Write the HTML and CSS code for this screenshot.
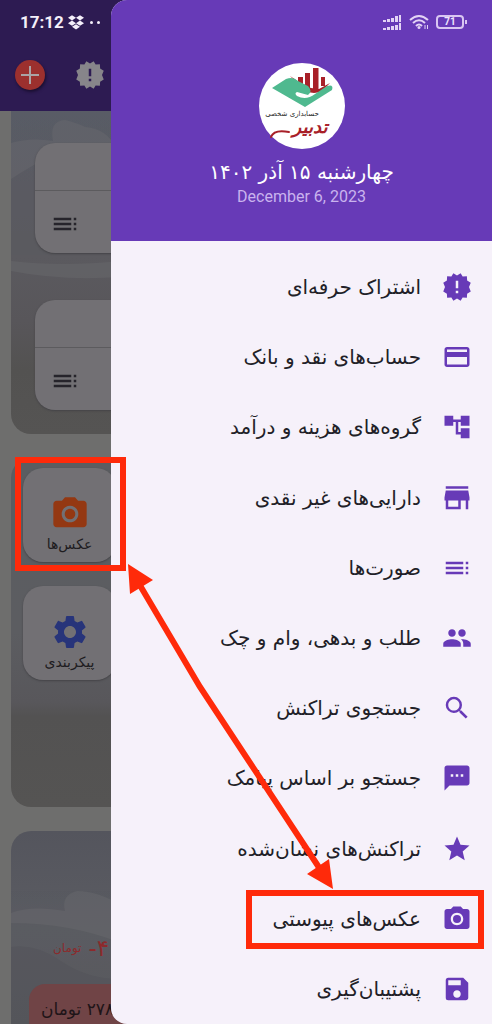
FILE: index.html
```html
<!DOCTYPE html>
<html lang="fa">
<head>
<meta charset="utf-8">
<meta name="viewport" content="width=device-width, initial-scale=1">
<title>تدبیر</title>
<link rel="stylesheet" href="styles.css">
</head>
<body>
<svg class="defs" aria-hidden="true">
  <symbol id="i-badge" viewBox="0 0 24 24"><path fill-rule="evenodd" d="M12 2.800 14.900 1l1.600 2.600 3.400-.2.2 3.300L23 8.500 21.600 12 23 15.500l-2.900 1.800-.2 3.300-3.400-.2-1.600 2.600L12 21.200 9.100 23l-1.600-2.600-3.400.2-.2-3.300L1 15.500 2.400 12 1 8.500l2.900-1.800.2-3.300 3.400.2L9.100 1zM11 7v6h2V7zm0 8v2h2v-2z"/></symbol>
  <symbol id="i-card" viewBox="0 0 24 24"><path d="M20 4H4c-1.110 0-1.990.89-1.990 2L2 18c0 1.110.89 2 2 2h16c1.110 0 2-.89 2-2V6c0-1.110-.89-2-2-2zm0 14H4v-6h16v6zm0-10H4V6h16v2z"/></symbol>
  <symbol id="i-tree" viewBox="0 0 24 24"><path d="M22 11V3h-7v3H9V3H2v8h7V8h2v10h4v3h7v-8h-7v3h-2V8h2v3z"/></symbol>
  <symbol id="i-shop" viewBox="0 0 24 24"><path fill-rule="evenodd" d="M3 2.500h18v2H3zM3 6h18l1 5.500V14h-1v7h-2v-7h-4v7H3v-7H2v-2.500zM5 14v5h8v-5z"/></symbol>
  <symbol id="i-toc" viewBox="0 0 24 24"><path d="M3 9h14V7H3v2zm0 4h14v-2H3v2zm0 4h14v-2H3v2zm16 0h2v-2h-2v2zm0-10v2h2V7h-2zm0 6h2v-2h-2v2z"/></symbol>
  <symbol id="i-people" viewBox="0 0 24 24"><path d="M16 11c1.660 0 2.990-1.340 2.990-3S17.660 5 16 5s-3 1.340-3 3 1.340 3 3 3zm-8 0c1.660 0 2.990-1.340 2.990-3S9.660 5 8 5 5 6.340 5 8s1.340 3 3 3zm0 2c-2.330 0-7 1.170-7 3.500V19h14v-2.500c0-2.330-4.670-3.500-7-3.500zm8 0c-.29 0-.62.02-.97.05 1.160.84 1.970 1.970 1.970 3.450V19h6v-2.500c0-2.330-4.670-3.500-7-3.500z"/></symbol>
  <symbol id="i-search" viewBox="0 0 24 24"><path d="M15.500 14h-.79l-.28-.27A6.471 6.471 0 0 0 16 9.500 6.500 6.500 0 1 0 9.500 16c1.610 0 3.090-.59 4.230-1.570l.27.28v.79l5 4.990L20.490 19l-4.990-5zm-6 0C7.010 14 5 11.990 5 9.500S7.010 5 9.500 5 14 7.010 14 9.500 11.990 14 9.500 14z"/></symbol>
  <symbol id="i-sms" viewBox="0 0 24 24"><path d="M20 2H4c-1.100 0-1.990.9-1.990 2L2 22l4-4h14c1.100 0 2-.9 2-2V4c0-1.100-.9-2-2-2zM9 11H7V9h2v2zm4 0h-2V9h2v2zm4 0h-2V9h2v2z"/></symbol>
  <symbol id="i-star" viewBox="0 0 24 24"><path d="M12 17.270L18.180 21l-1.640-7.030L22 9.240l-7.190-.61L12 2 9.190 8.630 2 9.240l5.460 4.730L5.820 21z"/></symbol>
  <symbol id="i-camera" viewBox="0 0 24 24"><circle cx="12" cy="12" r="3.200"/><path d="M9 2L7.170 4H4c-1.100 0-2 .9-2 2v12c0 1.100.9 2 2 2h16c1.100 0 2-.9 2-2V6c0-1.100-.9-2-2-2h-3.170L15 2H9zm3 15c-2.760 0-5-2.240-5-5s2.240-5 5-5 5 2.240 5 5-2.240 5-5 5z"/></symbol>
  <symbol id="i-save" viewBox="0 0 24 24"><path d="M17 3H5a2 2 0 0 0-2 2v14a2 2 0 0 0 2 2h14c1.100 0 2-.9 2-2V7l-4-4zm-5 16c-1.660 0-3-1.340-3-3s1.340-3 3-3 3 1.340 3 3-1.340 3-3 3zm3-10H5V5h10v4z"/></symbol>
  <symbol id="i-gear" viewBox="0 0 24 24"><path d="M19.140 12.940c.04-.3.060-.61.060-.94 0-.32-.02-.64-.07-.94l2.030-1.580a.49.49 0 0 0 .12-.61l-1.920-3.320a.488.488 0 0 0-.59-.22l-2.390.96c-.5-.38-1.030-.7-1.620-.94l-.36-2.540a.484.484 0 0 0-.48-.41h-3.840c-.24 0-.43.17-.47.41l-.36 2.540c-.59.24-1.130.57-1.620.94l-2.390-.96c-.22-.08-.47 0-.59.22L2.740 8.870c-.12.21-.08.47.12.61l2.030 1.580c-.05.3-.09.63-.09.94s.02.64.07.94l-2.030 1.580a.49.49 0 0 0-.12.61l1.920 3.320c.12.22.37.29.59.22l2.390-.96c.5.38 1.030.7 1.620.94l.36 2.540c.05.24.24.41.48.41h3.840c.24 0 .44-.17.47-.41l.36-2.540c.59-.24 1.130-.56 1.620-.94l2.390.96c.22.08.47 0 .59-.22l1.920-3.320c.12-.22.07-.47-.12-.61l-2.010-1.580zM12 15.600c-1.980 0-3.600-1.620-3.600-3.600s1.620-3.600 3.600-3.600 3.600 1.620 3.600 3.600-1.620 3.600-3.600 3.600z"/></symbol>
</svg>

<div class="screen">
  <div class="app">
    <header class="app-bar">
      <div class="status">
        <span>17:12</span>
        <svg class="dropbox" viewBox="0 0 24 22" aria-hidden="true"><path d="M6 0l6 4-6 4-6-4zM18 0l6 4-6 4-6-4zM6 8l6 4-6 4-6-4zM18 8l6 4-6 4-6-4zM12 13.500l6 4-6 4-6-4z"/></svg>
        <i class="dot"></i><i class="dot"></i>
      </div>
      <div class="actions">
        <button class="add" aria-label="افزودن"><svg viewBox="0 0 24 24"><path d="M11 3h2v8h8v2h-8v8h-2v-8H3v-2h8z"/></svg></button>
        <button class="badge" aria-label="اشتراک"><svg class="icon"><use href="#i-badge"/></svg></button>
      </div>
    </header>
    <main class="cards">
      <section class="card card-list">
        <svg class="scene" viewBox="0 0 481 323" preserveAspectRatio="xMinYMin slice" aria-hidden="true"><path d="M0 32Q20 26 42 30 38 10 54 9 66 12 74 16 96 18 104 36L104 60Q60 44 30 50 12 60 0 68z"/><path d="M0 150Q50 156 110 150V166Q50 170 0 160z"/></svg>
        <div class="panel"><div class="panel-top"></div><div class="panel-body"><svg class="icon"><use href="#i-toc"/></svg></div></div>
        <div class="panel"><div class="panel-top"></div><div class="panel-body"><svg class="icon"><use href="#i-toc"/></svg></div></div>
      </section>
      <section class="card card-tiles">
        <button class="tile photos"><svg class="icon"><use href="#i-camera"/></svg><span dir="rtl">عکس‌ها</span></button>
        <button class="tile config"><svg class="icon"><use href="#i-gear"/></svg><span dir="rtl">پیکربندی</span></button>
      </section>
      <section class="card card-balance">
        <svg class="scene" viewBox="0 0 481 193" preserveAspectRatio="xMinYMin slice" aria-hidden="true"><path d="M0 82Q20 74 54 80 50 64 66 60 86 60 110 74V112Q60 92 0 92z"/><path class="hill" d="M0 116Q24 112 50 130T110 148V193H0z"/></svg>
        <p class="balance"><small dir="rtl">تومان</small><b dir="rtl">۴-</b></p>
        <p class="amount"><span dir="rtl">۲۷۸ تومان</span></p>
      </section>
    </main>
  </div>

  <aside class="drawer" dir="rtl">
    <header class="drawer-head">
      <div class="sys" dir="ltr" aria-hidden="true">
        <svg class="signal" viewBox="0 0 19 15"><path d="M0 5h3v2H0zM4 4h3v3H4zM8 3h3v4H8zM12 1h3v6h-3zM16 0h2v7h-2zM0 13h3v2H0zM4 12h3v3H4zM8 11h3v4H8zM12 10h3v5h-3zM16 8h2v7h-2z"/></svg>
        <svg class="wifi" viewBox="0 0 20 16"><path d="M1 6Q10-2 19 6M4 9Q10 3.500 16 9M7 12Q10 9 13 12"/><circle cx="10" cy="13.500" r="1.500"/><path class="thin" d="M16 11v4M18.500 11v4"/></svg>
        <span class="battery">71</span>
      </div>
      <svg class="logo" viewBox="0 0 86 86" role="img" aria-label="تدبیر">
        <circle cx="43" cy="43" r="43" fill="#fff"/>
        <path fill="#a82028" d="M39 14h5v9h-5zM46 10h5v15h-5zM54 5h5.500v21H54zM62 14h4v9h-4zM31 13l9 6 12 6 8 1 11-6-9 9-7 1-7-1-9-8z"/>
        <path fill="#4fb98f" d="M13 25L27 16Q34 13 39 18L49 23Q54 28 49 32L38 29Q35 30 38 33 47 38 56 31L68 23Q75 21 73 27L46 44Z"/>
        <path fill="none" stroke="#a82028" stroke-width="2" stroke-linecap="round" d="M12 74Q15 66 30 69"/>
        <text x="33" y="53" font-size="7" text-anchor="middle" fill="#222">حسابداری شخصی</text>
        <text x="51" y="70" font-size="18" text-anchor="middle" font-weight="bold" font-style="italic" fill="#a82028">تدبیر</text>
      </svg>
      <p class="date-fa">چهارشنبه ۱۵ آذر ۱۴۰۲</p>
      <p class="date-en" dir="ltr">December 6, 2023</p>
    </header>
    <nav class="menu">
      <a href="#"><svg class="icon"><use href="#i-badge"/></svg>اشتراک حرفه‌ای</a>
      <a href="#"><svg class="icon"><use href="#i-card"/></svg>حساب‌های نقد و بانک</a>
      <a href="#"><svg class="icon"><use href="#i-tree"/></svg>گروه‌های هزینه و درآمد</a>
      <a href="#"><svg class="icon"><use href="#i-shop"/></svg>دارایی‌های غیر نقدی</a>
      <a href="#"><svg class="icon"><use href="#i-toc"/></svg>صورت‌ها</a>
      <a href="#"><svg class="icon"><use href="#i-people"/></svg>طلب و بدهی، وام و چک</a>
      <a href="#"><svg class="icon"><use href="#i-search"/></svg>جستجوی تراکنش</a>
      <a href="#"><svg class="icon"><use href="#i-sms"/></svg>جستجو بر اساس پیامک</a>
      <a href="#"><svg class="icon"><use href="#i-star"/></svg>تراکنش‌های نشان‌شده</a>
      <a href="#"><svg class="icon"><use href="#i-camera"/></svg>عکس‌های پیوستی</a>
      <a href="#"><svg class="icon"><use href="#i-save"/></svg>پشتیبان‌گیری</a>
    </nav>
  </aside>

  <svg class="marks" viewBox="0 0 492 1024" aria-hidden="true">
    <rect x="18" y="460" width="105" height="108"/>
    <rect x="249" y="893" width="232" height="53"/>
    <path d="M138 582L200 687 322 872"/>
    <path class="tip" d="M128 564L153 580 130 594zM333 889L329 859 307 874z"/>
  </svg>
</div>
</body>
</html>
```
FILE: styles.css
```css
* { box-sizing: border-box; }
body { margin: 0; font-family: "DejaVu Sans", sans-serif; background: #6e6e6d; }
p { margin: 0; }
button { border: 0; padding: 0; font: inherit; }
.defs { display: none; }
.icon { width: 30px; height: 30px; fill: currentColor; flex: none; }

.screen {
  position: relative;
  display: grid;
  grid-template-columns: 111px 1fr;
  min-height: 100vh;
  overflow: hidden;
}
.app {
  grid-area: 1 / 1 / 2 / 3;
  display: flex;
  flex-direction: column;
  min-width: 0;
}

.app-bar { height: 111px; background: #2d1b52; }
.status {
  display: flex;
  align-items: center;
  gap: 4px;
  height: 44px;
  padding-left: 20px;
  color: #f4effa;
  font: bold 17px/20px Roboto, sans-serif;
}
.dropbox { width: 16px; height: 15px; fill: currentColor; margin-right: 2px; }
.dot { width: 3px; height: 3px; border-radius: 50%; background: currentColor; }
.actions { display: flex; align-items: center; gap: 30px; padding: 16px 0 0 15px; }
.add {
  width: 30px;
  height: 30px;
  border-radius: 50%;
  background: #9c302e;
  box-shadow: 1px 2px 3px #1a0f30;
}
.add svg { display: block; width: 24px; height: 24px; margin: auto; fill: #aaa3a5; }
.badge { background: none; color: #87858a; }
.badge .icon { display: block; }

.cards { flex: 1; display: flex; flex-direction: column; gap: 24px; padding-left: 11px; }
.card { position: relative; border-radius: 20px 0 0 20px; overflow: hidden; }
.scene { position: absolute; inset: 0; width: 100%; height: 100%; fill: #6c6d70; opacity: .4; }
.scene .hill { fill: #505157; }
.card-list {
  display: flex;
  flex-direction: column;
  gap: 47px;
  padding: 32px 0 24px 24px;
  border-top-left-radius: 0;
  background: linear-gradient(#595c66, #5b5a5f 45%, #58565a 65%, #535251 80%, #555453);
}
.panel {
  position: relative;
  border-radius: 20px 0 0 20px;
  background: #727074;
  box-shadow: 0 1px 2px #444347;
}
.panel-top { height: 48px; border-bottom: 1px solid #5c5b5e; }
.panel-body { display: flex; align-items: center; height: 62px; padding: 4px 0 0 15px; color: #26242b; }

.card-tiles {
  display: flex;
  flex-direction: column;
  gap: 24px;
  padding: 10px 0 127px 12px;
  background: linear-gradient(#5b5d61, #5c5d61 50%, #58575b 70%, #535252 74%, #555453);
}
.tile {
  display: flex;
  flex-direction: column;
  align-items: center;
  width: 93px;
  height: 94px;
  padding-top: 26px;
  border-radius: 20px;
  background: #727074;
  box-shadow: 0 1px 2px #444347;
  color: #1e1c21;
  font-size: 14px;
  line-height: 20px;
}
.tile .icon { width: 40px; height: 40px; }
.photos .icon { color: #943812; }
.config .icon { color: #27347a; }

.card-balance {
  flex: 1;
  min-height: 180px;
  border-bottom-left-radius: 0;
  padding: 101px 0 0 18px;
  background: linear-gradient(#54555d, #5b5c62 50%, #58595d);
}
.balance { position: relative; display: flex; align-items: center; gap: 7px; height: 32px; padding-left: 24px; color: #8c2a2c; }
.balance small { font-size: 12px; }
.balance b { font-weight: normal; font-size: 23px; }
.amount {
  position: relative;
  margin-top: 20px;
  padding: 12px 0 0 12px;
  height: 40px;
  border-radius: 16px 0 0 0;
  background: #704446;
  color: #1e1418;
  font-size: 17px;
  line-height: 26px;
}

.drawer {
  grid-area: 1 / 2 / 2 / 3;
  position: relative;
  display: flex;
  flex-direction: column;
  border-radius: 16px 0 0 16px;
  overflow: hidden;
  background: #f6f1fa;
}
.drawer-head {
  display: flex;
  flex-direction: column;
  align-items: center;
  height: 241px;
  background: #673ab7;
  color: #fff;
}
.sys { align-self: stretch; display: flex; align-items: center; justify-content: flex-end; height: 44px; padding-right: 28px; gap: 7px; }
.signal { width: 19px; height: 15px; fill: #e3d3f5; }
.wifi { width: 20px; height: 16px; fill: none; stroke: #e3d3f5; stroke-width: 2; }
.wifi circle { fill: #e3d3f5; stroke: none; }
.wifi .thin { stroke-width: 1; }
.battery {
  position: relative;
  width: 28px;
  height: 14px;
  border: 2px solid #d9c6f2;
  border-radius: 4px;
  color: #efe5fb;
  font: bold 10px/10px Roboto, sans-serif;
  text-align: center;
}
.battery::after { content: ""; position: absolute; right: -5px; top: 3px; width: 2px; height: 4px; background: #d9c6f2; }
.logo { width: 86px; height: 86px; margin-top: 19px; }
.date-fa { margin-top: 8px; font-size: 20px; line-height: 30px; }
.date-en { font: 16px/20px Roboto, sans-serif; color: #c9b3ee; }

.menu { flex: 1; display: flex; flex-direction: column; padding-top: 11px; }
.menu a {
  flex: 1 0 70px;
  display: flex;
  align-items: center;
  gap: 21px;
  padding-right: 20px;
  color: #221f28;
  font-size: 20px;
  line-height: 30px;
  text-decoration: none;
  white-space: nowrap;
}
.menu .icon { color: #673ab7; }

.marks { position: absolute; top: 0; left: 0; width: 492px; height: 1024px; pointer-events: none; fill: none; stroke: #ff2a0a; stroke-width: 6; }
.marks .tip { fill: #ff2a0a; stroke: none; }
```
